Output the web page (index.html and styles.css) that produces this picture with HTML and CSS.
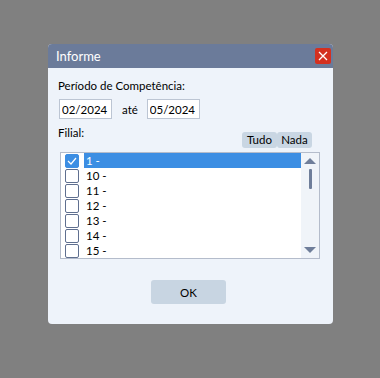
FILE: index.html
```html
<!DOCTYPE html>
<html lang="pt">
<head>
    <meta charset="UTF-8">
    <title>Informe</title>
    <link rel="stylesheet" href="styles.css">
</head>
<body>
    <div class="dialog">
        <div class="titlebar">
            <span class="title">Informe</span>
            <button class="close">
                <svg width="10" height="10" viewBox="0 0 10 10"><path d="M1 1L9 9M9 1L1 9" stroke="#fff" stroke-width="1.3"/></svg>
            </button>
        </div>
        <div class="content">
            <div class="label">Período de Competência:</div>
            <div class="period">
                <input class="field" value="02/2024">
                <span class="until">até</span>
                <input class="field" value="05/2024">
            </div>
            <div class="filial-head">
                <span class="label">Filial:</span>
                <div class="toggles">
                    <button class="small">Tudo</button>
                    <button class="small">Nada</button>
                </div>
            </div>
            <div class="list">
                <div class="rows">
                    <div class="row selected"><span class="box checked"><svg width="10" height="8" viewBox="0 0 10 8"><path d="M1 4L4 7L9 1" fill="none" stroke="#fff" stroke-width="1.2"/></svg></span><span class="name">1 -</span></div>
                    <div class="row"><span class="box"></span><span class="name">10 -</span></div>
                    <div class="row"><span class="box"></span><span class="name">11 -</span></div>
                    <div class="row"><span class="box"></span><span class="name">12 -</span></div>
                    <div class="row"><span class="box"></span><span class="name">13 -</span></div>
                    <div class="row"><span class="box"></span><span class="name">14 -</span></div>
                    <div class="row"><span class="box"></span><span class="name">15 -</span></div>
                </div>
                <div class="scrollbar">
                    <span class="arrow up"></span>
                    <span class="thumb"></span>
                    <span class="arrow down"></span>
                </div>
            </div>
            <div class="actions">
                <button class="ok">OK</button>
            </div>
        </div>
    </div>
</body>
</html>
```

FILE: styles.css
```css
body {
    margin: 0;
    padding: 44px 0 0 48px;
    background: #808080;
    font-family: Lato, 'Noto Sans', sans-serif;
    font-size: 11.5px;
    color: #000;
    height: 378px;
    box-sizing: border-box;
}

.dialog {
    width: 285px;
    height: 280px;
    background: #eef3fa;
    border-radius: 4px;
    overflow: hidden;
}

.titlebar {
    height: 24px;
    background: #6b7b9a;
    display: flex;
    align-items: center;
    justify-content: space-between;
    padding: 0 2px 0 8px;
}

.title {
    color: #fff;
    font-size: 13px;
}

.close {
    width: 16px;
    height: 16px;
    padding: 0;
    border: none;
    border-radius: 2px;
    background: #d4301f;
    display: flex;
    align-items: center;
    justify-content: center;
}

.content {
    padding: 10px 13px 0 10px;
}

.label {
    line-height: 15px;
}

.period {
    display: flex;
    align-items: center;
    margin: 6px 0 0 1px;
}

.field {
    width: 53px;
    height: 20px;
    box-sizing: border-box;
    border: 1px solid #bcc5d3;
    background: #fff;
    font: inherit;
    padding: 0 2px;
    color: #000;
}

.until {
    margin: 0 9px 0 10px;
}

.filial-head {
    display: flex;
    justify-content: space-between;
    margin-top: 6px;
    height: 23px;
}

.toggles {
    display: flex;
    align-self: flex-end;
    margin-right: 8px;
}

.small {
    height: 16px;
    width: 35px;
    padding: 0;
    border: none;
    border-radius: 3px;
    background: #c9d6e3;
    font: inherit;
    line-height: 16px;
    color: #000;
}

.list {
    display: flex;
    width: 260px;
    height: 107px;
    box-sizing: border-box;
    margin: 4px 0 0 2px;
    border: 1px solid #b4bccb;
    background: #fff;
}

.rows {
    flex: 1;
    overflow: hidden;
}

.row {
    height: 15px;
    display: flex;
    align-items: center;
    padding-left: 4px;
    overflow: hidden;
}

.box {
    width: 14px;
    height: 14px;
    box-sizing: border-box;
    border: 1px solid #5f6f8f;
    border-radius: 2px;
    background: #fff;
    display: flex;
    align-items: center;
    justify-content: center;
}

.box.checked {
    background: #3c8ee3;
    border-color: #3c8ee3;
}

.name {
    flex: 1;
    margin-left: 5px;
    padding-left: 2px;
    line-height: 15px;
    height: 15px;
}

.selected .name {
    background: #3c8ee3;
    color: #fff;
}

.scrollbar {
    width: 18px;
    background: #f0f4f9;
    display: flex;
    flex-direction: column;
    align-items: center;
    padding: 5px 0;
    box-sizing: border-box;
}

.arrow {
    width: 0;
    height: 0;
    border-left: 6px solid transparent;
    border-right: 6px solid transparent;
}

.arrow.up {
    border-bottom: 6px solid #6f7e9a;
}

.arrow.down {
    border-top: 6px solid #6f7e9a;
    margin-top: auto;
}

.thumb {
    width: 3px;
    height: 20px;
    margin-top: 5px;
    background: #6f7e9a;
    border-radius: 1px;
}

.actions {
    display: flex;
    justify-content: center;
    margin-top: 21px;
    padding-right: 1px;
}

.ok {
    width: 75px;
    height: 24px;
    border: none;
    border-radius: 3px;
    background: #c8d5e2;
    font: inherit;
    color: #000;
}
```
